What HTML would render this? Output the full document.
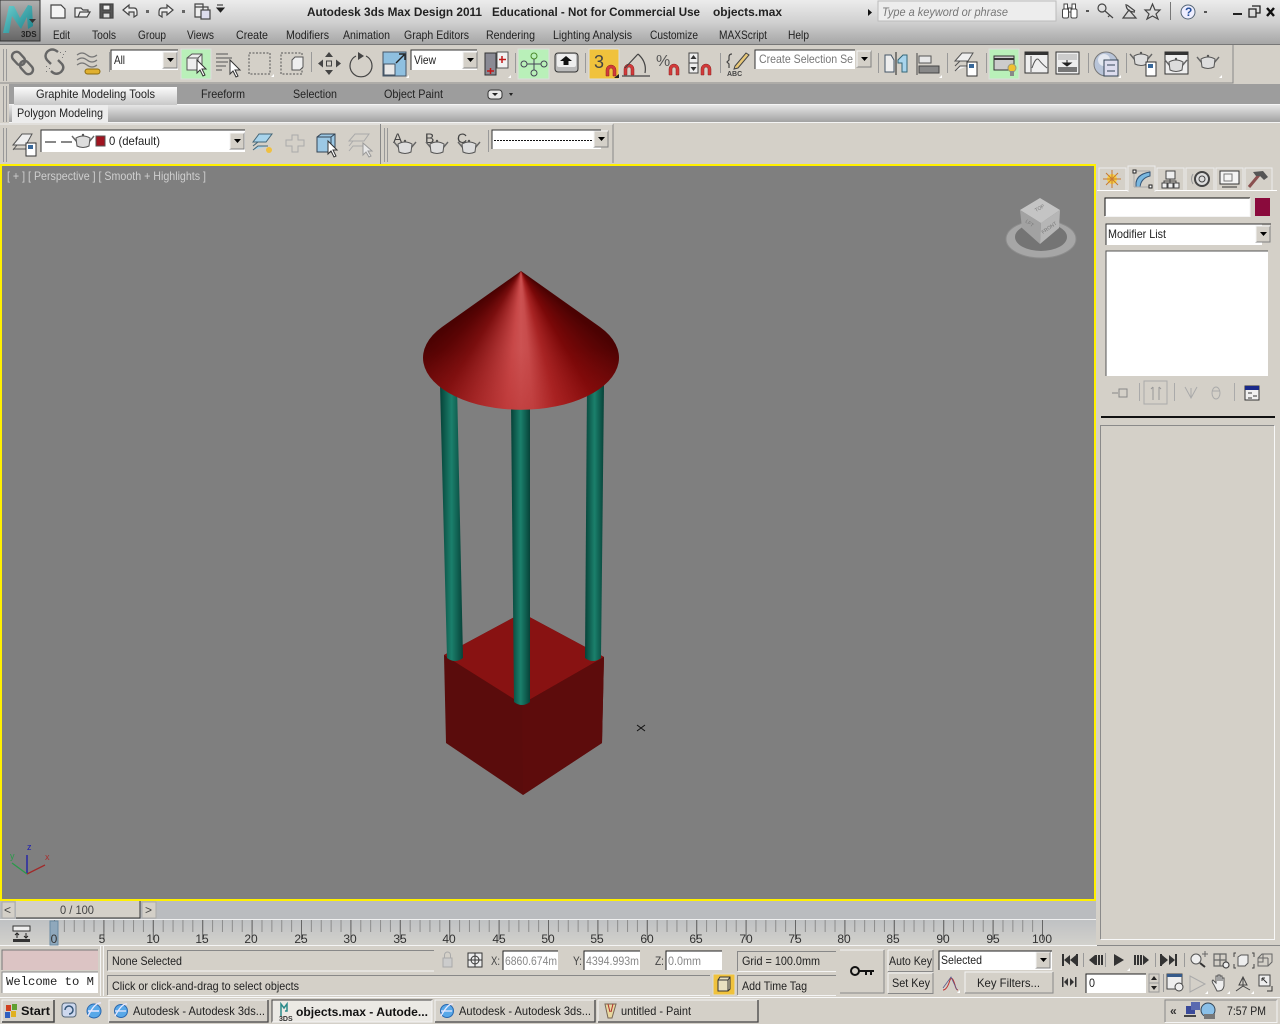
<!DOCTYPE html>
<html><head><meta charset="utf-8"><title>objects.max</title>
<style>
html,body{margin:0;padding:0;width:1280px;height:1024px;overflow:hidden;background:#d4d0c8}
svg{position:absolute;left:0;top:0}
text{font-family:"Liberation Sans",sans-serif;font-size:12px;fill:#222}
.b{font-weight:bold}
.g{fill:#888}
.r{font-size:12px;fill:#333;text-anchor:middle}
.i{fill:none;stroke:#444;stroke-width:1.2}
.l{fill:#e8e8e8;stroke:#444;stroke-width:1}
#cone{position:absolute;left:420px;top:268px;width:204px;height:146px;
clip-path:path('M101 3 L22 59 A98 52 0 1 0 180 59 Z');
background:linear-gradient(180deg,rgba(170,25,25,0) 55%,rgba(170,25,25,.3) 100%),conic-gradient(from 120deg at 101px 3px,#4a0202 0deg,#4a0202 8deg,#7a0808 30deg,#a82424 45deg,#c84c4c 55deg,#cc5252 60deg,#c84848 66deg,#a02828 80deg,#7a0e0e 92deg,#5a0404 105deg,#4a0202 113deg,#4a0202 360deg)}
</style></head><body>
<svg width="1280" height="1024" viewBox="0 0 1280 1024">
<defs>
<linearGradient id="tb" x1="0" y1="0" x2="0" y2="1"><stop offset="0" stop-color="#ececec"/><stop offset=".5" stop-color="#d0d0d0"/><stop offset="1" stop-color="#a4a4a4"/></linearGradient>
<linearGradient id="rb" x1="0" y1="0" x2="0" y2="1"><stop offset="0" stop-color="#e6e6e6"/><stop offset="1" stop-color="#a2a2a2"/></linearGradient>
<linearGradient id="tab" x1="0" y1="0" x2="0" y2="1"><stop offset="0" stop-color="#fbfbfb"/><stop offset="1" stop-color="#c8c8c8"/></linearGradient>
<linearGradient id="p" x1="0" y1="0" x2="1" y2="0"><stop offset="0" stop-color="#064238"/><stop offset=".5" stop-color="#1b806c"/><stop offset="1" stop-color="#064238"/></linearGradient>
<linearGradient id="rul" x1="0" y1="0" x2="0" y2="1"><stop offset="0" stop-color="#bfc1c3"/><stop offset="1" stop-color="#d2d1cc"/></linearGradient>
<linearGradient id="m" x1="0" y1="0" x2="1" y2="1"><stop offset="0" stop-color="#6cd0d0"/><stop offset="1" stop-color="#1a7f88"/></linearGradient>
<linearGradient id="ap" x1="0" y1="0" x2="0" y2="1"><stop offset="0" stop-color="#b0b0b0"/><stop offset="1" stop-color="#666"/></linearGradient>
<g id="pot"><path d="M-11-6 L-6 0 M11-6 L6 0" stroke="#666" fill="none" stroke-width="1.400"/><path d="M-7-4 Q0-8 7-4 L6 4 Q0 7-6 4Z" fill="#ddd" stroke="#555"/><circle cx="0" cy="-7" r="1.200" fill="#555"/></g>
<g id="mag"><path d="M-5 5 V-1 a5 5 0 0 1 10 0 V5 H2 V-1 a2 2 0 0 0-4 0 V5Z" fill="#d23a3a" stroke="#8a2020" stroke-width=".5"/></g>
<g id="dn"><rect x="-7" y="-8" width="14" height="16" fill="#d4d0c8" stroke="#808080"/><path d="M-7 8 V-8 H7" fill="none" stroke="#f4f4f4"/><path d="M-3-2 H4 L.5 2Z" fill="#000"/></g>
<g id="sm"><path d="M0 0 h3 v-3z" fill="#fff"/></g>
</defs>

<!-- base -->
<rect width="1280" height="1024" fill="#d4d0c8"/>
<rect width="1280" height="45" fill="url(#tb)"/>
<rect y="44" width="1280" height="1" fill="#777"/>
<!-- app button -->
<rect x="0" y="0" width="40" height="41" fill="url(#ap)" stroke="#333"/>
<path d="M3 33 L9 6 L14 6 L20 18 L28 5 L32 6 L33 26 L28 29 L27 17 L21 29 L12 16 L9 33Z" fill="url(#m)"/>
<path d="M29 19 h7 l-3.500 4z" fill="#333"/>
<text x="21" y="37" class="b" style="font-size:8px;fill:#222">3DS</text>
<!-- QAT -->
<g class="i" fill="none" stroke="#444">
<path d="M51 5 H61 L65 9 V18 H51Z" fill="#f4f4f4"/>
<path d="M75 8 H81 L83 10 H88 V12 H80 L78 17 H75Z M78 17 L80 12 H90 L87 17Z" fill="#eee"/>
<path d="M100 4 H113 V18 H100Z" fill="#555"/><rect x="103" y="5" width="7" height="5" fill="#eee"/><rect x="103" y="13" width="7" height="5" fill="#ddd"/>
<path d="M123 10 L129 5 V8 H134 Q137 8 137 12 V15 L134 17 V12 H129 V15Z" fill="#eee"/>
<path d="M173 10 L167 5 V8 H162 Q159 8 159 12 V15 L162 17 V12 H167 V15Z" fill="#eee"/>
<path d="M195 4 H203 V17 H195Z M195 7 H208 V12" fill="#eee"/><rect x="201" y="10" width="9" height="9" fill="#dde"/>
</g>
<rect x="146" y="10" width="3" height="3" fill="#666"/><rect x="182" y="10" width="3" height="3" fill="#666"/>
<path d="M217 5 H223 M217 8 H224 L220.500 12Z" stroke="#222" fill="#222"/>
<!-- title -->
<g class="b"><text x="307" y="16" textLength="175" lengthAdjust="spacingAndGlyphs" class="b">Autodesk 3ds Max Design 2011</text>
<text x="492" y="16" textLength="208" lengthAdjust="spacingAndGlyphs" class="b">Educational - Not for Commercial Use</text>
<text x="713" y="16" textLength="69" lengthAdjust="spacingAndGlyphs" class="b">objects.max</text></g>
<path d="M868 9 L872 12.500 L868 16Z" fill="#111"/>
<rect x="878" y="1" width="178" height="20" fill="#ededed" stroke="#bbb"/>
<text x="882" y="16" textLength="126" lengthAdjust="spacingAndGlyphs" style="font-style:italic;fill:#777">Type a keyword or phrase</text>
<!-- info icons -->
<g fill="#fff" stroke="#444"><rect x="1062.500" y="9" width="6" height="9" rx="1.500"/><rect x="1071" y="9" width="6" height="9" rx="1.500"/><rect x="1064" y="4" width="3.500" height="5"/><rect x="1072" y="4" width="3.500" height="5"/><rect x="1068.500" y="8" width="2.500" height="4"/></g>
<rect x="1086" y="10" width="3" height="2" fill="#555"/>
<g class="i"><circle cx="1102" cy="8" r="4"/><path d="M1105 11 L1113 18 M1110 15 l-2 2"/>
<path d="M1123 18 H1136 L1129 10Z M1126 4 Q1126 12 1135 12 M1127 5 L1135 11"/>
<path d="M1152.500 4 L1155 10 L1160 10 L1156 14 L1158 19 L1152.500 16 L1147 19 L1149 14 L1145 10 L1150 10Z"/></g>
<rect x="1170" y="2" width="1" height="18" fill="#777"/>
<circle cx="1188" cy="12" r="7" fill="#eef" stroke="#567"/><text x="1185" y="16" class="b" style="fill:#25509a">?</text>
<rect x="1204" y="11" width="3" height="2" fill="#555"/>
<rect x="1233" y="13" width="9" height="2" fill="#222"/>
<path d="M1252 6 H1260 V13 H1256 M1249 9 H1256 V17 H1249Z" fill="none" stroke="#222" stroke-width="1.300"/>
<path d="M1267 8 L1274 16 M1274 8 L1267 16" stroke="#111" stroke-width="2.400"/>
<!-- menu -->
<text x="53" y="39" textLength="17" lengthAdjust="spacingAndGlyphs">Edit</text>
<text x="92" y="39" textLength="24" lengthAdjust="spacingAndGlyphs">Tools</text>
<text x="138" y="39" textLength="28" lengthAdjust="spacingAndGlyphs">Group</text>
<text x="187" y="39" textLength="27" lengthAdjust="spacingAndGlyphs">Views</text>
<text x="236" y="39" textLength="32" lengthAdjust="spacingAndGlyphs">Create</text>
<text x="286" y="39" textLength="43" lengthAdjust="spacingAndGlyphs">Modifiers</text>
<text x="343" y="39" textLength="47" lengthAdjust="spacingAndGlyphs">Animation</text>
<text x="404" y="39" textLength="65" lengthAdjust="spacingAndGlyphs">Graph Editors</text>
<text x="486" y="39" textLength="49" lengthAdjust="spacingAndGlyphs">Rendering</text>
<text x="553" y="39" textLength="79" lengthAdjust="spacingAndGlyphs">Lighting Analysis</text>
<text x="650" y="39" textLength="48" lengthAdjust="spacingAndGlyphs">Customize</text>
<text x="719" y="39" textLength="48" lengthAdjust="spacingAndGlyphs">MAXScript</text>
<text x="788" y="39" textLength="21" lengthAdjust="spacingAndGlyphs">Help</text>

<!-- main toolbar -->
<rect x="0" y="45" width="1233" height="38" fill="#d4d0c8"/>
<path d="M1233 45 V83 H0" fill="none" stroke="#888"/>
<rect x="3" y="49" width="1" height="32" fill="#999"/><rect x="6" y="49" width="1" height="32" fill="#999"/>
<g fill="none" stroke="#666" stroke-width="2.400">
<rect x="14" y="51" width="9" height="15" rx="4.500" transform="rotate(-42 18.500 58.500)"/><rect x="22" y="60" width="9" height="15" rx="4.500" transform="rotate(-42 26.500 67.500)"/>
<path d="M58 52 Q52 47 47 52 Q44 56 47 60 L51 64"/><path d="M51 71 Q56 76 61 72 Q65 68 62 64 L58 60"/>
</g>
<g fill="#777"><rect x="60" y="52" width="1" height="1"/><rect x="63" y="54" width="1" height="1"/><rect x="65" y="51" width="1" height="1"/><rect x="62" y="57" width="1" height="1"/><rect x="46" y="66" width="1" height="1"/><rect x="49" y="68" width="1" height="1"/><rect x="46" y="71" width="1" height="1"/></g>
<g fill="none" stroke="#777" stroke-width="1.200"><path d="M77 55 q5-4 10 0 t10 0 M77 60 q5-4 10 0 t10 0 M77 65 q5-4 10 0 t10 0"/></g>
<rect x="85" y="69" width="15" height="5" rx="2.500" fill="#e0b030" stroke="#8a6a10"/>
<rect x="109" y="52" width="1" height="20" fill="#999"/>
<!-- combo All -->
<rect x="111" y="50" width="67" height="20" fill="#fff"/><path d="M111 70 V50 H178" fill="none" stroke="#333"/>
<text x="114" y="64" textLength="11" lengthAdjust="spacingAndGlyphs">All</text>
<use href="#dn" x="170" y="60"/>
<!-- select -->
<rect x="181" y="49" width="30" height="30" fill="#b9f0b9" stroke="#ddd"/>
<path d="M187 58 L192 54 H202 V67 L199 70 H187Z" fill="#eee" stroke="#555"/><path d="M187 58 H198 V70 M198 58 L202 54" fill="none" stroke="#555"/>
<path d="M197 60 V73 L200 70 L203 76 L205 75 L202 69 L206 69Z" fill="#fff" stroke="#333"/>
<path d="M216 54 H228 M216 58 H232 M216 62 H228 M216 66 H226 M216 70 H222" stroke="#555"/>
<path d="M230 60 V74 L233 71 L236 77 L238 76 L235 70 L240 70Z" fill="#fff" stroke="#333"/>
<rect x="249" y="53" width="21" height="21" fill="none" stroke="#555" stroke-dasharray="2 1.500"/>
<use href="#sm" x="271" y="77"/>
<rect x="281" y="53" width="21" height="21" fill="none" stroke="#555" stroke-dasharray="2 1.500"/>
<path d="M292 60 L295 57 H303 V67 L300 70 H292Z" fill="#eee" stroke="#555"/>
<rect x="311" y="52" width="1" height="20" fill="#999"/>
<!-- move -->
<g fill="#444"><path d="M329 52 l-4 5 h8z M329 75 l-4-5 h8z M318 63.500 l5-4 v8z M341 63.500 l-5-4 v8z"/></g>
<rect x="326.500" y="61" width="5" height="5" fill="none" stroke="#444"/>
<path d="M356 56 A11 11 0 1 0 366 56" class="i" fill="none"/><path d="M358 52 l6 4 -6 4z" fill="#444"/>
<!-- scale -->
<rect x="383" y="52" width="23" height="24" fill="#8fc0e0" stroke="#456"/><rect x="384" y="64" width="11" height="11" fill="#e8e8e8" stroke="#456"/><path d="M396 63 L404 55 M399 54 H405 V60" fill="none" stroke="#222" stroke-width="1.400"/>
<use href="#sm" x="406" y="78"/>
<rect x="411" y="50" width="66" height="20" fill="#fff"/><path d="M411 70 V50 H477" fill="none" stroke="#333"/>
<text x="414" y="64" textLength="22" lengthAdjust="spacingAndGlyphs">View</text>
<use href="#dn" x="470" y="60"/>
<!-- pivot -->
<rect x="485" y="53" width="11" height="22" fill="#8a8a94" stroke="#333"/><rect x="497" y="52" width="11" height="16" fill="#f2f2f2" stroke="#555"/>
<path d="M490.500 68 v6 M487 71 h7 M502 56 v7 M499 59.500 h7" stroke="#c01818" stroke-width="1.500"/>
<use href="#sm" x="508" y="78"/>
<rect x="515" y="53" width="1" height="20" fill="#999"/>
<rect x="518" y="49" width="31" height="30" fill="#b9f0b9" stroke="#ddd"/>
<g fill="none" stroke="#445"><circle cx="534" cy="56" r="3" stroke="#4a8a2a"/><circle cx="524" cy="64" r="3"/><circle cx="544" cy="64" r="3"/><circle cx="534" cy="73" r="3"/><path d="M534 59 V70 M527 64 H541"/></g>
<rect x="555" y="53" width="23" height="19" rx="3" fill="#bbb" stroke="#333"/><rect x="557" y="54" width="19" height="13" rx="2" fill="#eee"/><path d="M566 56 l-6 5 h3.500 v4 h5 v-4 h3.500z" fill="#111"/>
<rect x="585" y="53" width="1" height="20" fill="#999"/>
<!-- snaps -->
<rect x="589" y="49" width="30" height="30" fill="#f0c23c" stroke="#ddd"/>
<text x="594" y="68" style="font-size:18px;fill:#444">3</text>
<use href="#mag" x="611" y="71"/>
<path d="M614 78 l5-4 v4z" fill="#222"/>
<use href="#mag" x="629" y="70"/>
<path d="M622 76 H650 M625 68 L638 54 M638 54 Q647 62 645 73" class="i"/>
<text x="656" y="66" style="font-size:16px;fill:#555">%</text>
<use href="#mag" x="674" y="70"/>
<rect x="689" y="53" width="9" height="20" fill="#eee" stroke="#444"/><path d="M689 63 h9" stroke="#444"/><path d="M693.500 55 l-3 4 h6z M693.500 71 l-3-4 h6z" fill="#333"/>
<use href="#mag" x="706" y="70"/>
<rect x="720" y="53" width="1" height="20" fill="#999"/>
<path d="M732 54 q-3 0-3 3 v3 l-2 2 l2 2 v4" class="i"/>
<path d="M735 66 L746 53 l3 2 -11 13 -4 1z" fill="#e8c878" stroke="#444"/>
<text x="727" y="76" class="b" style="font-size:7px;fill:#444">ABC</text>
<rect x="755" y="50" width="100" height="19" fill="#fff"/><path d="M755 69 V50 H855" fill="none" stroke="#333"/>
<text x="759" y="63" textLength="94" lengthAdjust="spacingAndGlyphs" style="fill:#777">Create Selection Se</text>
<use href="#dn" x="864" y="59"/>
<rect x="878" y="53" width="1" height="20" fill="#999"/>
<path d="M885 55 H891 L894 60 V72 H885Z" fill="#eee" stroke="#456"/><path d="M896 52 V75" stroke="#222"/><path d="M907 55 H903 L898 60 V63 H902 V72 H907Z" fill="#a8d4ec" stroke="#367"/>
<path d="M917 53 V75" stroke="#444"/><rect x="919" y="56" width="12" height="7" fill="#e8e8e8" stroke="#555"/><rect x="919" y="66" width="20" height="7" fill="#888" stroke="#444"/>
<use href="#sm" x="939" y="78"/>
<rect x="947" y="53" width="1" height="20" fill="#999"/>
<path d="M955 61 L962 53 H973 L968 61Z M955 66 L960 61 M955 71 L960 66 H968" fill="#eee" stroke="#555"/>
<rect x="967" y="62" width="10" height="14" fill="#fff" stroke="#333"/><rect x="969" y="64" width="5" height="4" fill="#38689a"/>
<rect x="986" y="53" width="1" height="20" fill="#999"/>
<rect x="989" y="49" width="30" height="30" fill="#b9f0b9" stroke="#ddd"/>
<rect x="994" y="56" width="20" height="14" fill="#ccc" stroke="#333"/><path d="M994 59 H1014" stroke="#333" stroke-width="2"/>
<circle cx="1012" cy="68" r="4" fill="#f0c030" stroke="#997"/><rect x="1010" y="71" width="4" height="5" fill="#888"/>
<rect x="1025" y="52" width="23" height="21" fill="#eee" stroke="#333"/><rect x="1025" y="52" width="23" height="3" fill="#333"/><path d="M1031 56 V72 M1032 68 Q1036 56 1039 60 T1047 68" fill="none" stroke="#555"/>
<rect x="1056" y="52" width="23" height="22" fill="#eee" stroke="#333"/><rect x="1058" y="54" width="19" height="6" fill="#ccc"/><rect x="1058" y="67" width="19" height="5" fill="#777"/><path d="M1067 60 v4 M1063 63 h8 l-4 3z" stroke="#222" fill="#222"/>
<rect x="1088" y="53" width="1" height="20" fill="#999"/>
<circle cx="1106" cy="64" r="12" fill="#b8c4d8" stroke="#777"/><circle cx="1104" cy="60" r="6" fill="#e4e8f0"/><rect x="1104" y="60" width="14" height="16" fill="#dde" stroke="#345"/><path d="M1107 65 h8 M1107 71 h8" stroke="#345"/>
<use href="#sm" x="1118" y="78"/>
<rect x="1126" y="53" width="1" height="20" fill="#999"/>
<use href="#pot" x="1141" y="60"/><rect x="1146" y="62" width="10" height="14" fill="#fff" stroke="#333"/><rect x="1148" y="64" width="5" height="4" fill="#38689a"/>
<rect x="1165" y="52" width="23" height="22" fill="#eee" stroke="#333"/><rect x="1165" y="52" width="23" height="3" fill="#333"/><use href="#pot" x="1176" y="66"/>
<use href="#pot" x="1208" y="63"/><use href="#sm" x="1219" y="78"/>

<!-- ribbon -->
<rect x="0" y="84" width="1280" height="20" fill="#9d9d9d"/>
<rect x="0" y="105" width="1280" height="17" fill="url(#rb)"/>
<rect x="8" y="104" width="1272" height="1" fill="#f4f4f4"/><rect x="8" y="122" width="1272" height="1" fill="#f4f4f4"/>
<rect x="0" y="84" width="9" height="40" fill="#d4d0c8"/><rect x="3" y="86" width="1" height="36" fill="#999"/><rect x="6" y="86" width="1" height="36" fill="#999"/>
<rect x="14" y="87" width="163" height="18" fill="url(#tab)"/>
<text x="36" y="98" textLength="119" lengthAdjust="spacingAndGlyphs">Graphite Modeling Tools</text>
<text x="201" y="98" textLength="44" lengthAdjust="spacingAndGlyphs">Freeform</text>
<text x="293" y="98" textLength="44" lengthAdjust="spacingAndGlyphs">Selection</text>
<text x="384" y="98" textLength="59" lengthAdjust="spacingAndGlyphs">Object Paint</text>
<rect x="488" y="90" width="14" height="9" rx="3" fill="#e8e8e8" stroke="#333"/><path d="M492 93 h6 l-3 3z" fill="#222"/><path d="M509 93 h4 l-2 3z" fill="#222"/>
<rect x="12" y="105" width="96" height="18" fill="#ececec"/>
<text x="17" y="117" textLength="86" lengthAdjust="spacingAndGlyphs">Polygon Modeling</text>

<!-- layer row -->
<rect x="0" y="124" width="613" height="40" fill="#d4d0c8"/>
<path d="M613 124 V163" stroke="#888"/><path d="M0 124 H613" stroke="#eee"/>
<rect x="3" y="128" width="1" height="34" fill="#999"/><rect x="6" y="128" width="1" height="34" fill="#999"/>
<path d="M13 145 L22 134 H32 L26 145Z M13 150 L17 145 M13 149 H26" fill="#eee" stroke="#555"/>
<rect x="26" y="143" width="10" height="13" fill="#fff" stroke="#333"/><rect x="28" y="145" width="5" height="4" fill="#38689a"/>
<rect x="41" y="130" width="204" height="22" fill="#fff"/><path d="M41 152 V130 H245" fill="none" stroke="#333"/>
<rect x="45" y="141" width="11" height="2" fill="#888"/><rect x="61" y="141" width="11" height="2" fill="#888"/>
<use href="#pot" x="83" y="142"/>
<rect x="96" y="136" width="9" height="10" fill="#a01420" stroke="#555"/>
<text x="109" y="145" textLength="51" lengthAdjust="spacingAndGlyphs">0 (default)</text>
<use href="#dn" x="237" y="141"/>
<path d="M253 142 L259 134 H272 L266 142Z M253 146 L258 142 M253 150 L258 146 H268" fill="#a8d4ec" stroke="#467"/>
<circle cx="269" cy="150" r="3" fill="#f0c040"/>
<path d="M292 135 h6 v5 h6 v6 h-6 v6 h-6 v-6 h-6 v-6 h6z" fill="none" stroke="#aaa"/>
<path d="M317 137 L321 134 H335 V148 L331 152 H317Z" fill="#9cc8e4" stroke="#345"/><path d="M317 137 H331 V152 M331 137 L335 134" fill="none" stroke="#345"/>
<path d="M328 141 V154 L331 151 L334 157 L336 156 L333 150 L337 150Z" fill="#fff" stroke="#333"/>
<path d="M349 141 L355 134 H369 L364 141Z M349 146 L353 141 M349 151 L353 146 H363" fill="none" stroke="#aaa"/>
<path d="M363 143 V155 L366 152 L369 157 L371 156 L368 151 L372 151Z" fill="#e8e8e8" stroke="#999"/>
<rect x="380" y="124" width="1" height="40" fill="#888"/><rect x="384" y="128" width="1" height="34" fill="#999"/><rect x="387" y="128" width="1" height="34" fill="#999"/>
<text x="393" y="143" style="font-size:14px;fill:#444">A</text><use href="#pot" x="405" y="148"/>
<text x="425" y="143" style="font-size:14px;fill:#444">B</text><use href="#pot" x="437" y="148"/>
<text x="457" y="143" style="font-size:14px;fill:#444">C</text><use href="#pot" x="469" y="148"/>
<rect x="488" y="130" width="1" height="22" fill="#999"/>
<rect x="492" y="130" width="109" height="19" fill="#fff"/><path d="M492 149 V130 H601" fill="none" stroke="#333"/>
<path d="M494 140.500 H592" stroke="#111" stroke-dasharray="2 1"/>
<use href="#dn" x="601" y="139"/>

<!-- viewport -->
<rect x="1" y="165" width="1094" height="735" fill="#7f7f7f" stroke="#fff000" stroke-width="2"/>
<text x="7" y="180" textLength="199" lengthAdjust="spacingAndGlyphs" style="fill:#cfcfcf">[ + ] [ Perspective ] [ Smooth + Highlights ]</text>
<!-- viewcube -->
<ellipse cx="1041" cy="239" rx="35" ry="19" fill="#a6a6a6" stroke="#8c8c8c"/>
<ellipse cx="1041" cy="237" rx="26" ry="14" fill="#747474"/>
<path d="M1040 198 L1060 210 L1041 223 L1020 210Z" fill="#c4c4c4"/>
<path d="M1020 210 L1041 223 L1040 244 L1022 228Z" fill="#a2a2a2"/>
<path d="M1060 210 L1059 228 L1040 244 L1041 223Z" fill="#b6b6b6"/>
<text transform="translate(1036 212) rotate(-30)" style="font-size:5px;fill:#777">TOP</text>
<text transform="translate(1025 222) rotate(35)" style="font-size:5px;fill:#777">LFT</text>
<text transform="translate(1043 234) rotate(-35)" style="font-size:5px;fill:#777">FRONT</text>
<!-- model -->
<path d="M444 655 L522 613 L604 657 L602 743 L523 795 L446 743Z" fill="#5a0c0c"/>
<path d="M444 655 L522 613 L604 657 L522 704Z" fill="#881212"/>
<path d="M522 704 L604 657 L602 743 L523 795Z" fill="#5d0c0c"/>
<path d="M440 385 H457 L463 658 Q455 664 447 658Z" fill="url(#p)"/>
<path d="M587 385 H604 L601 658 Q593 664 585 658Z" fill="url(#p)"/>
<path d="M511 405 H530 L530 702 Q522 708 514 702Z" fill="url(#p)"/>
<!-- cursor -->
<path d="M637 725 L645 731 M645 725 L637 731" stroke="#111" fill="none"/>
<!-- axis -->
<path d="M27 874 V855" stroke="#1a1aaa" stroke-width="1.300"/><path d="M27 874 L45 865" stroke="#a02a2a" stroke-width="1.300"/><path d="M27 874 L12 863" stroke="#2a9a4a" stroke-width="1.300"/>
<text x="27" y="850" style="font-size:9px;fill:#2020b0">z</text><text x="45" y="860" style="font-size:9px;fill:#a83030">x</text><text x="10" y="859" style="font-size:9px;fill:#2a9a4a">y</text>

<!-- command panel -->
<rect x="1097" y="190" width="180" height="1" fill="#fff"/>
<g fill="#d4d0c8" stroke="#ececec"><path d="M1099 190 V168 H1126 V190"/><path d="M1128 192 V166 H1155 V192" /><path d="M1157 190 V168 H1184 V190"/><path d="M1186 190 V168 H1214 V190"/><path d="M1216 190 V168 H1243 V190"/><path d="M1245 190 V168 H1272 V190"/></g>
<circle cx="1112" cy="179" r="5" fill="#f8d040"/><path d="M1112 170 V188 M1103 179 H1121 M1106 173 L1118 185 M1118 173 L1106 185" stroke="#c87a30"/>
<path d="M1136 187 V183 Q1137 174 1150 172 V176 Q1141 178 1140 187Z" fill="#7ab8e0" stroke="#357"/><path d="M1134 171 H1150 M1134 171 V187 M1134 187 H1150" fill="none" stroke="#aaa"/><rect x="1133" y="170" width="3" height="3" fill="#fff" stroke="#222"/><rect x="1149" y="185" width="3" height="3" fill="#fff" stroke="#222"/>
<g fill="#eee" stroke="#444"><rect x="1166" y="171" width="9" height="8"/><rect x="1162" y="183" width="5" height="5"/><rect x="1168" y="183" width="5" height="5"/><rect x="1174" y="183" width="5" height="5"/></g><path d="M1170 179 V183 M1164 183 V181 H1176 V183" fill="none" stroke="#444"/>
<circle cx="1202" cy="179" r="7" fill="#ddd" stroke="#444" stroke-width="2"/><circle cx="1202" cy="179" r="3" fill="none" stroke="#444"/><path d="M1193 174 Q1190 179 1193 184" fill="none" stroke="#999"/>
<rect x="1220" y="171" width="19" height="13" fill="#f4f4f4" stroke="#333"/><path d="M1224 174 H1232 V181 H1224Z" fill="none" stroke="#777"/><path d="M1222 187 H1237" stroke="#333"/>
<path d="M1249 187 L1259 175" stroke="#8a5050" stroke-width="3"/><path d="M1253 172 L1263 171 L1268 177 L1264 180 L1260 176 L1256 176Z" fill="#555"/>
<rect x="1105" y="198" width="145" height="18" fill="#fff"/><path d="M1105 216 V198 H1250" fill="none" stroke="#111"/><path d="M1105 216.500 H1250 V198" fill="none" stroke="#f4f4f4"/>
<rect x="1255" y="198" width="15" height="18" fill="#8a0a3c"/>
<rect x="1106" y="224" width="156" height="21" fill="#fff"/><path d="M1106 245 V224 H1271" fill="none" stroke="#333"/>
<text x="1108" y="238" textLength="58" lengthAdjust="spacingAndGlyphs">Modifier List</text>
<use href="#dn" x="1263" y="234"/>
<rect x="1106" y="251" width="162" height="125" fill="#fff"/><path d="M1106 376 V251 H1268" fill="none" stroke="#555"/>
<path d="M1112 393 H1118 M1119 389 V397 H1127 V389Z" fill="none" stroke="#888"/>
<rect x="1139" y="383" width="1" height="18" fill="#aaa"/>
<rect x="1144" y="381" width="23" height="23" fill="none" stroke="#aaa"/><path d="M1153 387 V400 M1153 387 l-2 2 M1159 387 V400 M1159 387 l2 2" fill="none" stroke="#999"/>
<rect x="1174" y="383" width="1" height="18" fill="#aaa"/>
<path d="M1185 387 L1191 398 L1197 387 M1191 398 V388" fill="none" stroke="#aaa"/>
<ellipse cx="1216" cy="393" rx="4" ry="6" fill="none" stroke="#aaa"/><path d="M1212 391 H1220" stroke="#aaa"/>
<rect x="1234" y="383" width="1" height="18" fill="#aaa"/>
<rect x="1245" y="386" width="14" height="14" fill="#f0f0f0" stroke="#333"/><rect x="1245" y="386" width="14" height="4" fill="#1a2a8a"/><path d="M1248 393 h4 M1253 396 h4 M1248 398 h4" stroke="#333"/>
<rect x="1101" y="416" width="174" height="2" fill="#111"/>
<rect x="1100.500" y="425.500" width="174" height="514" fill="#d4d0c8"/>
<path d="M1100.500 939.500 V425.500 H1274.500" fill="none" stroke="#8a8a8a"/><path d="M1100.500 939.500 H1274.500 V425.500" fill="none" stroke="#f8f8f8"/>

<!-- time slider -->
<rect x="0" y="901" width="1096" height="18" fill="#babcbf"/>
<rect x="2" y="902" width="13" height="16" fill="#d4d0c8" stroke="#aaa"/><text x="4" y="914" style="fill:#444">&lt;</text>
<rect x="16" y="901" width="124" height="17" fill="#d4d0c8"/><path d="M16 918 H140 V901" fill="none" stroke="#333"/>
<text x="60" y="914" textLength="34" lengthAdjust="spacingAndGlyphs" style="fill:#444">0 / 100</text>
<rect x="142" y="902" width="14" height="16" fill="#d4d0c8" stroke="#aaa"/><text x="145" y="914" style="fill:#444">&gt;</text>
<rect x="0" y="919" width="1096" height="1" fill="#f0f0f0"/>
<rect x="0" y="920" width="1096" height="25" fill="url(#rul)"/>
<rect x="0" y="945" width="1097" height="1" fill="#f4f4f4"/>
<rect x="1097" y="945" width="183" height="1" fill="#888"/>
<rect x="13" y="926" width="17" height="5" fill="#eee" stroke="#333"/><rect x="13" y="939" width="17" height="3" fill="#333"/><path d="M17 933 v5 M15 935 l2-2 2 2 M26 933 v5 M24 936 l2 2 2-2" fill="none" stroke="#222"/>
<path d="M54 926 H1043" stroke="#8d8d8d" stroke-width="12" stroke-dasharray="1 8.880" fill="none"/>
<path d="M54 930 H1043" stroke="#666" stroke-width="20" stroke-dasharray="1 48.400" fill="none"/>
<rect x="50" y="921" width="8" height="24" fill="#8fa8bc" stroke="#6a8aa2"/>
<g>
<text x="54" y="943" class="r">0</text><text x="102" y="943" class="r">5</text><text x="153" y="943" class="r">10</text><text x="202" y="943" class="r">15</text><text x="251" y="943" class="r">20</text><text x="301" y="943" class="r">25</text><text x="350" y="943" class="r">30</text><text x="400" y="943" class="r">35</text><text x="449" y="943" class="r">40</text><text x="499" y="943" class="r">45</text><text x="548" y="943" class="r">50</text><text x="597" y="943" class="r">55</text><text x="647" y="943" class="r">60</text><text x="696" y="943" class="r">65</text><text x="746" y="943" class="r">70</text><text x="795" y="943" class="r">75</text><text x="844" y="943" class="r">80</text><text x="893" y="943" class="r">85</text><text x="943" y="943" class="r">90</text><text x="993" y="943" class="r">95</text><text x="1042" y="943" class="r">100</text>
</g>

<!-- status -->
<rect x="2" y="950" width="96" height="20" fill="#dcc4c4"/><path d="M2 970 V950 H98" fill="none" stroke="#777"/>
<rect x="2" y="972" width="96" height="21" fill="#fff"/><path d="M2 993 V972 H98" fill="none" stroke="#888"/>
<text x="6" y="985" textLength="88" lengthAdjust="spacingAndGlyphs" style="font-family:'Liberation Mono',monospace;font-size:12px;fill:#222">Welcome to M</text>
<rect x="100" y="946" width="1" height="50" fill="#f4f4f4"/><rect x="103" y="946" width="1" height="50" fill="#f4f4f4"/>
<path d="M107.500 971 V950.500 H434" fill="none" stroke="#888"/><path d="M107.500 971 H434" stroke="#f4f4f4"/>
<text x="112" y="965" textLength="70" lengthAdjust="spacingAndGlyphs">None Selected</text>
<path d="M107.500 995 V975.500 H710" fill="none" stroke="#888"/><path d="M107.500 995.500 H710" stroke="#f4f4f4"/>
<text x="112" y="990" textLength="187" lengthAdjust="spacingAndGlyphs">Click or click-and-drag to select objects</text>
<rect x="443" y="958" width="9" height="9" fill="#ccc" stroke="#aaa"/><path d="M444.500 958 V955 a3 3 0 0 1 6 0 V958" fill="none" stroke="#aaa"/>
<rect x="468" y="953" width="14" height="14" fill="#eee" stroke="#333"/><circle cx="475" cy="960" r="4" fill="none" stroke="#333"/><path d="M475 953 V967 M468 960 H482" stroke="#333"/>
<text x="491" y="965" textLength="9" lengthAdjust="spacingAndGlyphs" style="fill:#444">X:</text>
<rect x="503" y="951" width="55" height="19" fill="#fff"/><path d="M503 970 V951 H558" fill="none" stroke="#222"/>
<text x="505" y="965" textLength="52" lengthAdjust="spacingAndGlyphs" style="fill:#888">6860.674m</text>
<text x="573" y="965" textLength="9" lengthAdjust="spacingAndGlyphs" style="fill:#444">Y:</text>
<rect x="584" y="951" width="56" height="19" fill="#fff"/><path d="M584 970 V951 H640" fill="none" stroke="#222"/>
<text x="586" y="965" textLength="53" lengthAdjust="spacingAndGlyphs" style="fill:#888">4394.993m</text>
<text x="655" y="965" textLength="9" lengthAdjust="spacingAndGlyphs" style="fill:#444">Z:</text>
<rect x="666" y="951" width="56" height="19" fill="#fff"/><path d="M666 970 V951 H722" fill="none" stroke="#222"/>
<text x="668" y="965" textLength="33" lengthAdjust="spacingAndGlyphs" style="fill:#888">0.0mm</text>
<rect x="713" y="974" width="22" height="21" fill="#f0c23c" stroke="#ddd"/><path d="M718 980 L720 977 H730 V989 L728 991 H718Z M718 980 H728 V991 M728 980 L730 977" fill="#e8e0c0" stroke="#333"/>
<path d="M737.500 971 V951.500 H836" fill="none" stroke="#888"/><path d="M737.500 971.500 H836" stroke="#f4f4f4"/>
<text x="742" y="965" textLength="78" lengthAdjust="spacingAndGlyphs">Grid = 100.0mm</text>
<path d="M737.500 995 V975.500 H836" fill="none" stroke="#888"/><path d="M737.500 995.500 H836" stroke="#f4f4f4"/>
<text x="742" y="990" textLength="65" lengthAdjust="spacingAndGlyphs">Add Time Tag</text>
<!-- key -->
<rect x="840" y="950" width="44" height="43" fill="#d4d0c8"/><path d="M840 950 H884" stroke="#f4f4f4"/><path d="M840 993 H884 V950" fill="none" stroke="#888"/>
<circle cx="855" cy="971" r="4" fill="none" stroke="#111" stroke-width="2"/><path d="M859 970 H874 V972 H872 V975 H870 V972 H867 V975 H865 V972 H859Z" fill="#111"/>
<path d="M888 950 H933 M888 950 V971" stroke="#f4f4f4"/><path d="M888 971.500 H933 V950" fill="none" stroke="#888"/>
<text x="889" y="965" textLength="43" lengthAdjust="spacingAndGlyphs">Auto Key</text>
<path d="M888 973 H933 M888 973 V993" stroke="#f4f4f4"/><path d="M888 993.500 H933 V973" fill="none" stroke="#888"/>
<text x="892" y="987" textLength="38" lengthAdjust="spacingAndGlyphs">Set Key</text>
<rect x="939" y="951" width="113" height="19" fill="#fff"/><path d="M939 970 V951 H1052" fill="none" stroke="#222"/>
<text x="941" y="964" textLength="41" lengthAdjust="spacingAndGlyphs">Selected</text>
<use href="#dn" x="1043" y="960"/>
<path d="M943 990 Q947 990 950 980 Q952 975 955 985 Q956 990 958 990" fill="none" stroke="#c03030"/><path d="M943 988 L951 977 L957 990" fill="none" stroke="#5a5a8a" stroke-width=".8"/><use href="#sm" x="957" y="993"/>
<rect x="965" y="972" width="88" height="21" fill="#d4d0c8"/><path d="M965 993 V972 H1053" fill="none" stroke="#f4f4f4"/><path d="M965 993 H1053 V972" fill="none" stroke="#888"/>
<text x="977" y="987" textLength="63" lengthAdjust="spacingAndGlyphs">Key Filters...</text>
<!-- playback -->
<g fill="#333">
<path d="M1062 954 h2 v12 h-2z M1078 954 h-2 v12 h2z M1064 960 l6-5 v10z M1070 960 l6-5 v10z"/>
<path d="M1089 960 l6-5 v10z M1095 955 h2 v10 h-2z M1098 955 h2 v10 h-2z M1101 955 h2 v10 h-2z" />
<path d="M1114 954 L1124 960 L1114 966Z"/>
<path d="M1134 955 h2 v10 h-2z M1137 955 h2 v10 h-2z M1140 955 h2 v10 h-2z M1143 955 l6 5 -6 5z"/>
<path d="M1160 954 h2 v12 h-2z M1175 954 h2 v12 h-2z M1162 955 l6 5 -6 5z M1169 955 l6 5 -6 5z"/>
<path d="M1062 977 h1.500 v10 h-1.500z M1075 977 h1.500 v10 h-1.500z M1064 982 l4-4 v8z M1074 982 l-4-4 v8z"/>
</g>
<rect x="1083" y="953" width="1" height="14" fill="#999"/><rect x="1105" y="953" width="1" height="14" fill="#999"/><rect x="1155" y="953" width="1" height="14" fill="#999"/>
<use href="#sm" x="1127" y="971"/>
<rect x="1086" y="974" width="60" height="19" fill="#fff"/><path d="M1086 993 V974 H1146" fill="none" stroke="#222"/>
<text x="1089" y="987" textLength="6" lengthAdjust="spacingAndGlyphs">0</text>
<rect x="1149" y="974" width="10" height="9" fill="#d4d0c8" stroke="#999"/><rect x="1149" y="983" width="10" height="9" fill="#d4d0c8" stroke="#999"/><path d="M1154 976 l-3 4 h6z M1154 990 l-3-4 h6z" fill="#222"/>
<rect x="1163" y="974" width="1" height="18" fill="#999"/>
<rect x="1167" y="974" width="15" height="15" fill="#eee" stroke="#444"/><rect x="1167" y="974" width="15" height="3" fill="#355a8a"/><circle cx="1179" cy="987" r="4" fill="#eee" stroke="#444"/>
<rect x="1184" y="953" width="1" height="14" fill="#999"/>
<circle cx="1196" cy="959" r="5" fill="#eee" stroke="#555"/><path d="M1200 963 L1205 967" stroke="#333" stroke-width="2"/><path d="M1202 954 h6 M1205 951 v6" stroke="#666"/>
<g class="i"><path d="M1214 954 H1226 V966 H1214Z M1220 954 V966 M1214 960 H1226" stroke="#666"/><circle cx="1226" cy="965" r="3" fill="#eee"/></g>
<path d="M1236 953 h-2 v4 M1252 953 h2 v4 M1236 968 h-2 v-4 M1252 968 h2 v-4" fill="none" stroke="#444"/><path d="M1238 957 l3-2 h7 v8 l-3 3 h-7z" fill="#eee" stroke="#555"/>
<path d="M1258 958 l4-4 h10 v8 l-4 4 h-10z M1268 958 v8 M1258 958 H1268 M1263 954 V962 H1258" fill="none" stroke="#666"/>
<path d="M1190 976 L1205 984 L1190 992Z" fill="none" stroke="#aaa"/><use href="#sm" x="1205" y="994"/>
<path d="M1214 985 q-3-4-1-5 l3 3 v-7 h2 v5 v-6 h2 v6 v-5 h2 v5 v-3 h2 v8 q-1 5-5 5 h-2z" fill="#eee" stroke="#555"/><use href="#sm" x="1227" y="994"/>
<path d="M1243 978 V986 L1236 991 M1243 986 L1250 990" fill="none" stroke="#444"/><path d="M1243 977 l-4 8 h8z" fill="none" stroke="#444"/><use href="#sm" x="1251" y="994"/>
<rect x="1259" y="975" width="11" height="11" fill="#eee" stroke="#444"/><path d="M1262 978 l5 5 M1262 978 h3 M1262 978 v3 M1272 986 v5 h-5" fill="none" stroke="#333"/>

<!-- taskbar -->
<rect x="0" y="997" width="1280" height="1" fill="#f8f8f8"/>
<rect x="2" y="1000" width="52" height="22" fill="#d4d0c8" stroke="#f4f4f4"/><path d="M2 1022 H54 V1000" fill="none" stroke="#444" stroke-width="1.500"/>
<rect x="6" y="1005" width="5" height="6" fill="#d04020"/><rect x="12" y="1004" width="5" height="6" fill="#60a030"/><rect x="5" y="1012" width="5" height="6" fill="#3060c0"/><rect x="11" y="1011" width="5" height="6" fill="#e0b020"/>
<text x="21" y="1015" textLength="29" lengthAdjust="spacingAndGlyphs" class="b" style="fill:#111">Start</text>
<rect x="62" y="1003" width="14" height="14" rx="3" fill="#cdd8ee" stroke="#567"/><path d="M65 1010 a4 4 0 1 1 4 4" fill="none" stroke="#357" stroke-width="1.500"/>
<circle cx="94" cy="1011" r="7" fill="#58a8e8" stroke="#2a68b0"/><path d="M88 1011 h11 M101 1003 Q95 1002 88 1016" stroke="#e8e8ff" fill="none" stroke-width="1.400"/>
<!-- task buttons -->
<rect x="109" y="1000" width="159" height="22" fill="#d4d0c8" stroke="#f4f4f4"/><path d="M109 1022 H268 V1000" fill="none" stroke="#444" stroke-width="1.300"/>
<circle cx="121" cy="1011" r="6.500" fill="#58a8e8" stroke="#2a68b0"/><path d="M115 1011 h11 M127 1004 Q122 1003 115 1016" stroke="#e8e8ff" fill="none" stroke-width="1.300"/>
<text x="133" y="1015" textLength="132" lengthAdjust="spacingAndGlyphs">Autodesk - Autodesk 3ds...</text>
<rect x="272" y="1000" width="160" height="22" fill="#ebe9e4" stroke="#444"/><path d="M272 1022 H432 V1000" fill="none" stroke="#f4f4f4"/>
<path d="M281 1016 V1004 L284 1008 L287 1004 V1011 H285" fill="none" stroke="#2a8a8a" stroke-width="1.500"/>
<text x="279" y="1021" class="b" style="font-size:7px;fill:#333">3DS</text>
<text x="296" y="1016" textLength="132" lengthAdjust="spacingAndGlyphs" class="b" style="fill:#111">objects.max - Autode...</text>
<rect x="435" y="1000" width="160" height="22" fill="#d4d0c8" stroke="#f4f4f4"/><path d="M435 1022 H595 V1000" fill="none" stroke="#444" stroke-width="1.300"/>
<circle cx="447" cy="1011" r="6.500" fill="#58a8e8" stroke="#2a68b0"/><path d="M441 1011 h11 M453 1004 Q448 1003 441 1016" stroke="#e8e8ff" fill="none" stroke-width="1.300"/>
<text x="459" y="1015" textLength="132" lengthAdjust="spacingAndGlyphs">Autodesk - Autodesk 3ds...</text>
<rect x="598" y="1000" width="160" height="22" fill="#d4d0c8" stroke="#f4f4f4"/><path d="M598 1022 H758 V1000" fill="none" stroke="#444" stroke-width="1.300"/>
<path d="M605 1004 L608 1018 H612 L616 1004Z" fill="#e8d8a0" stroke="#765"/><path d="M608 1004 L610 1012 M613 1004 L611 1012" stroke="#b03030"/>
<text x="621" y="1015" textLength="70" lengthAdjust="spacingAndGlyphs">untitled - Paint</text>
<!-- tray -->
<path d="M1165 1022 V1000 H1277" fill="none" stroke="#888"/><path d="M1165 1022.500 H1277 V1000" fill="none" stroke="#f4f4f4"/>
<text x="1170" y="1015" class="b" style="fill:#333">«</text>
<rect x="1186" y="1006" width="9" height="8" fill="#3a4a9a"/><rect x="1191" y="1002" width="9" height="8" fill="#5a6ab0"/><rect x="1184" y="1015" width="12" height="2" fill="#444"/>
<circle cx="1208" cy="1010" r="7" fill="#8ac0e8" stroke="#345"/><rect x="1204" y="1014" width="11" height="5" fill="#777"/>
<text x="1227" y="1015" textLength="39" lengthAdjust="spacingAndGlyphs">7:57 PM</text>
</svg>
<div id="cone"></div>
</body></html>
